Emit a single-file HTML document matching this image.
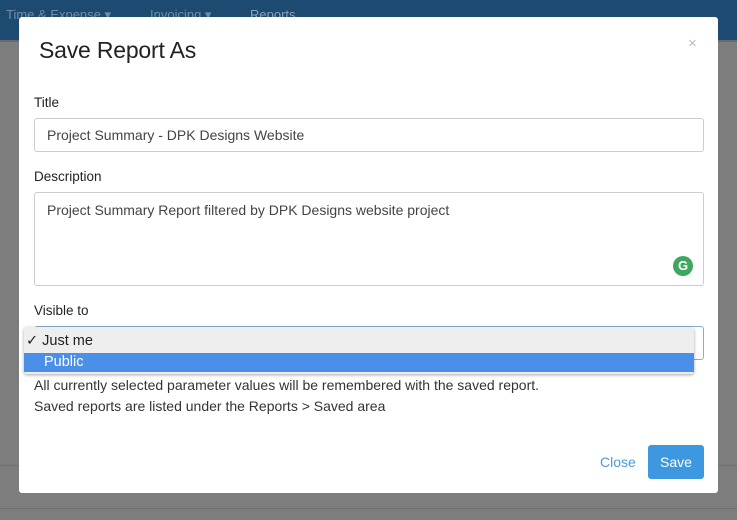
<!DOCTYPE html>
<html><head><style>
body{margin:0;width:737px;height:520px;overflow:hidden;background:#7d7d7d;font-family:"Liberation Sans",sans-serif;position:relative}
.nav{position:absolute;left:0;top:0;width:737px;height:40px;background:#1c4a70;color:#6f8eaa;font-size:13px}
.nav span{position:absolute;top:7px}
.bg{position:absolute;background:#777;}
.modal{position:absolute;left:19px;top:17px;width:699px;height:476px;background:#fff;border-radius:3px}
.abs{position:absolute}
h1{position:absolute;left:20px;top:20px;margin:0;font-size:23px;font-weight:normal;color:#222;letter-spacing:-0.2px}
.lbl{position:absolute;left:15px;font-size:13.5px;color:#222}
.inp{position:absolute;left:15px;width:670px;border:1px solid #ccc;border-radius:3px;font-size:14px;color:#444;box-sizing:border-box;padding:0 12px}
.t{font-size:14px;color:#333;position:absolute;left:15px}
</style></head><body>
<div class="nav"><span style="left:6px">Time &amp; Expense ▾</span><span style="left:150px">Invoicing ▾</span><span style="left:250px;color:#8aa2b8">Reports</span></div>
<div class="bg" style="left:0;top:40px;width:737px;height:2px;background:#6a6a6a"></div>
<div class="bg" style="left:0;top:465px;width:737px;height:1px;background:#6e6e6e"></div>
<div class="bg" style="left:0;top:508px;width:737px;height:1px;background:#6e6e6e"></div>
<div class="modal">
<h1>Save Report As</h1>
<div class="abs" style="left:669px;top:18px;color:#bbb;font-size:15px">×</div>
<div class="lbl" style="top:78px">Title</div>
<div class="inp" style="top:101px;height:34px;line-height:32px">Project Summary - DPK Designs Website</div>
<div class="lbl" style="top:152px">Description</div>
<div class="inp" style="top:175px;height:94px;padding-top:9px;line-height:16px">Project Summary Report filtered by DPK Designs website project</div>
<div class="abs" style="left:654px;top:239px;width:20px;height:20px;border-radius:50%;background:#3da760;color:#fff;font-size:13px;text-align:center;line-height:20px;font-weight:bold">G</div>
<div class="lbl" style="top:286px">Visible to</div>
<div class="inp" style="top:309px;height:34px;border-color:#8aaed0"></div>
<div class="abs" style="left:5px;top:310px;width:670px;height:47px;background:#eee;border-radius:3px;box-shadow:0 1px 3px rgba(0,0,0,.35)">
<div class="abs" style="left:2px;top:6px;font-size:14.5px;color:#222">✓ Just me</div>
<div class="abs" style="left:0;top:26px;width:670px;height:19px;background:#4a90e8;color:#fff;font-size:14.5px;line-height:19px"><span style="padding-left:20px">Public</span></div>
</div>
<div class="t" style="top:360px">All currently selected parameter values will be remembered with the saved report.</div>
<div class="t" style="top:381px">Saved reports are listed under the Reports &gt; Saved area</div>
<div class="abs" style="left:581px;top:437px;color:#4a9ad8;font-size:14px">Close</div>
<div class="abs" style="left:629px;top:428px;width:56px;height:34px;background:#3d98e0;border-radius:3px;color:#fff;font-size:14px;text-align:center;line-height:34px">Save</div>
</div>
</body></html>
